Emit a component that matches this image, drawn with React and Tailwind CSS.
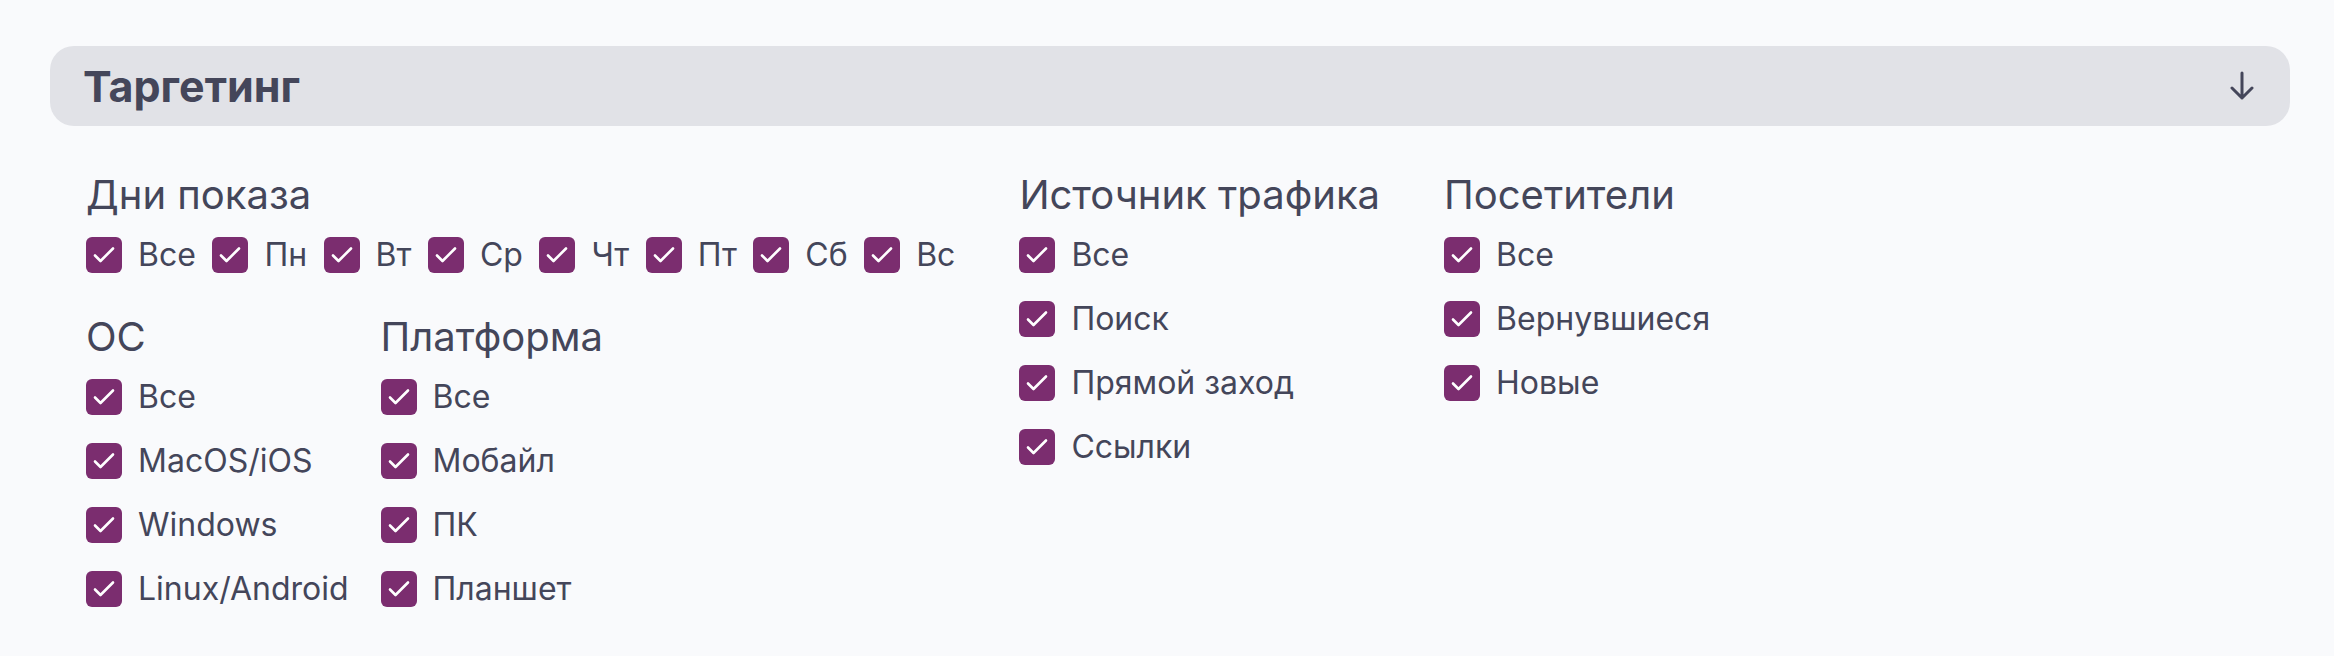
import React from "react";

const font = { fontFamily: "Inter, 'Noto Sans', sans-serif" };

function Check({ label }) {
  return (
    <label className="flex items-center gap-[16px] h-[36px]">
      <span className="w-[36px] h-[36px] rounded-[6px] bg-[#7b2d6f] flex items-center justify-center shrink-0">
        <svg width="36" height="36" viewBox="0 0 36 36" fill="none">
          <polyline points="9,18.5 14.5,24 27,11.5" stroke="white" strokeWidth="2.6" strokeLinecap="round" strokeLinejoin="round" />
        </svg>
      </span>
      <span className="text-[32px] leading-[36px] text-[#44465a] whitespace-nowrap">{label}</span>
    </label>
  );
}

function Group({ title, items }) {
  return (
    <div className="flex flex-col">
      <div className="text-[40px] leading-[48px] text-[#44465a] whitespace-nowrap">{title}</div>
      <div className="mt-[18px] flex flex-col gap-[28px]">
        {items.map((it) => (
          <Check key={it} label={it} />
        ))}
      </div>
    </div>
  );
}

export default function App() {
  const days = ["Все", "Пн", "Вт", "Ср", "Чт", "Пт", "Сб", "Вс"];
  return (
    <div className="w-[2334px] h-[656px] bg-[#f9fafc] pt-[46px] pl-[50px]" style={font}>
      <div className="w-[2240px] h-[80px] rounded-[24px] bg-[#e1e2e7] flex items-center justify-between pl-[33px] pr-[36px]">
        <div className="text-[43px] font-bold text-[#44465a] leading-none">Таргетинг</div>
        <svg width="24" height="30" viewBox="0 0 24 30" fill="none">
          <path d="M12 2v25M2 17l10 10 10-10" stroke="#44465a" strokeWidth="3" strokeLinecap="round" strokeLinejoin="round" />
        </svg>
      </div>
      <div className="pl-[36px] pt-[45px] flex gap-[64px]">
        <div className="flex flex-col">
          <div className="text-[40px] leading-[48px] text-[#44465a]">Дни показа</div>
          <div className="mt-[18px] flex items-center gap-[16.5px]">
            {days.map((d) => (
              <Check key={d} label={d} />
            ))}
          </div>
          <div className="mt-[40px] flex gap-[32px]">
            <Group title="ОС" items={["Все", "MacOS/iOS", "Windows", "Linux/Android"]} />
            <Group title="Платформа" items={["Все", "Мобайл", "ПК", "Планшет"]} />
          </div>
        </div>
        <Group title="Источник трафика" items={["Все", "Поиск", "Прямой заход", "Ссылки"]} />
        <Group title="Посетители" items={["Все", "Вернувшиеся", "Новые"]} />
      </div>
    </div>
  );
}
